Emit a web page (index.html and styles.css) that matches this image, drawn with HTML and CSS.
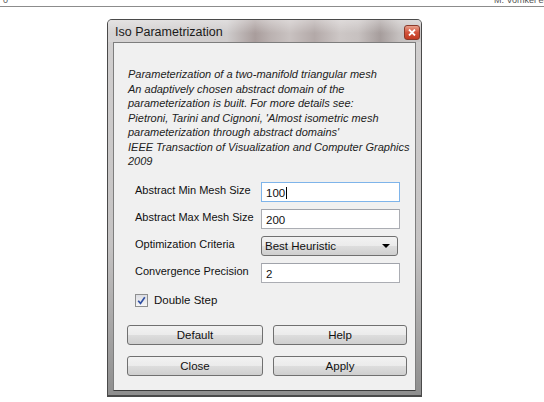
FILE: index.html
```html
<!DOCTYPE html>
<html>
  <head>
    <meta charset="UTF-8">
    <title>Iso Parametrization</title>
    <link rel="stylesheet" href="styles.css">
  </head>
  <body>

    <div class="page-head">
      <span>0</span>
      <span class="authors">M. Vomkel et al.</span>
    </div>

    <div class="window">
      <div class="titlebar">
        <span class="title">Iso Parametrization</span>
        <span class="close-btn">
          <svg width="8" height="7" viewBox="0 0 8 7">
            <path d="M1 0.5 L7 6.5 M7 0.5 L1 6.5" stroke="#fff" stroke-width="1.8"/>
          </svg>
        </span>
      </div>

      <div class="client">
        <p class="desc">
          Parameterization of a two-manifold triangular mesh<br>
          An adaptively chosen abstract domain of the<br>
          parameterization is built. For more details see:<br>
          Pietroni, Tarini and Cignoni, 'Almost isometric mesh<br>
          parameterization through abstract domains'<br>
          IEEE Transaction of Visualization and Computer Graphics<br>
          2009
        </p>

        <form class="fields" name="iso">
          <label for="min_size">Abstract Min Mesh Size</label>
          <div class="textbox focused" id="min_size">100<span class="caret"></span></div>

          <label for="max_size">Abstract Max Mesh Size</label>
          <div class="textbox" id="max_size">200</div>

          <label for="criteria">Optimization Criteria</label>
          <div class="combo" id="criteria">
            <span>Best Heuristic</span>
            <span class="arrow"></span>
          </div>

          <label for="precision">Convergence Precision</label>
          <div class="textbox" id="precision">2</div>
        </form>

        <div class="check-row">
          <span class="checkbox">
            <svg width="9" height="9" viewBox="0 0 9 9">
              <path d="M1.2 4.8 L3.5 7.4 L7.8 1.2" fill="none" stroke="#2f4fa3" stroke-width="1.7"/>
            </svg>
          </span>
          <span>Double Step</span>
        </div>

        <div class="buttons">
          <button type="button">Default</button>
          <button type="button">Help</button>
          <button type="button">Close</button>
          <button type="button">Apply</button>
        </div>
      </div>
    </div>

  </body>
</html>
```

FILE: styles.css
```css
:root {
  --frame-color: #4a4a4a;
  --field-border: #abadb3;
  --button-border: #707070;
  --client-bg: #f0f0f0;
}

body {
  margin: 0;
  width: 544px;
  height: 402px;
  overflow: hidden;
  background-color: #fff;
  font-family: "Liberation Sans", Arial, sans-serif;
  color: #111;
}

/* cabecalho da pagina, cortado no topo */
.page-head {
  display: flex;
  justify-content: space-between;
  height: 6px;
  line-height: 0;
  font-size: 9px;
  color: #555;
  padding-left: 3px;
  border-bottom: 1px solid #8c8c8c;
  overflow: hidden;
}

.authors {
  margin-right: -14px;
}

/* janela */
.window {
  width: 315px;
  height: 378px;
  margin: 12px 0 0 107px;
  box-sizing: border-box;
  border: 1px solid var(--frame-color);
  border-bottom-width: 2px;
  border-radius: 5px 5px 0 0;
  padding: 0 5px 4px;
  background: linear-gradient(to bottom, #d2d0d0, #c5c3c3 60%, #8e8e8e);
}

.titlebar {
  display: flex;
  justify-content: space-between;
  height: 22px;
  margin: 0 -5px;
  padding: 0 1px 0 7px;
  border-radius: 4px 4px 0 0;
  background:
    linear-gradient(to bottom, rgba(255, 255, 255, 0.35), rgba(255, 255, 255, 0) 60%),
    linear-gradient(to right, #d6d4d4 0%, #cfcccc 38%, #a99d9c 47%, #bbb2b1 52%,
      #c9c2c1 58%, #b3a9a8 66%, #cdc7c6 74%, #c7c1c0 80%, #a69d9c 87%, #c5c0bf 93%, #cbc7c7 100%);
}

.title {
  font-size: 12.5px;
  line-height: 24px;
  color: #1a1a1a;
}

.close-btn {
  display: flex;
  align-items: center;
  justify-content: center;
  width: 16px;
  height: 15px;
  margin-top: 5px;
  border: 1px solid #8a3a2a;
  border-radius: 3px;
  box-sizing: border-box;
  background: linear-gradient(to bottom, #e8a08c, #d3533b 50%, #c23b22);
}

.client {
  height: 349px;
  box-sizing: border-box;
  border: 1px solid #7d7d7d;
  border-bottom-color: #3c3c3c;
  background-color: var(--client-bg);
}

.desc {
  margin: 0;
  padding: 24px 0 0 14px;
  font-size: 11px;
  font-style: italic;
  line-height: 14.5px;
  color: #222;
}

/* campos */
.fields {
  display: grid;
  grid-template-columns: 126px 139px;
  grid-auto-rows: 20px;
  row-gap: 7px;
  margin: 13px 0 0 21px;
  align-items: center;
  font-size: 11.5px;
}

.fields label {
  font-size: 11px;
  padding-bottom: 4px;
}

.textbox {
  height: 20px;
  box-sizing: border-box;
  padding: 4px 4px 0;
  border: 1px solid var(--field-border);
  border-top-color: #a0a3aa;
  background-color: #fff;
}

.textbox.focused {
  border-color: #7eb4ea;
}

.caret {
  display: inline-block;
  width: 1px;
  height: 12px;
  margin-left: 1px;
  vertical-align: -2px;
  background-color: #000;
}

.combo {
  display: flex;
  align-items: center;
  justify-content: space-between;
  width: 137px;
  height: 20px;
  box-sizing: border-box;
  padding: 0 7px 0 3px;
  border: 1px solid var(--button-border);
  border-radius: 3px;
  background: linear-gradient(to bottom, #f2f2f2, #ebebeb 50%, #dddddd 51%, #cfcfcf);
}

.arrow {
  width: 0;
  height: 0;
  border-left: 4px solid transparent;
  border-right: 4px solid transparent;
  border-top: 4px solid #000;
}

/* checkbox */
.check-row {
  display: flex;
  align-items: center;
  gap: 6px;
  margin: 11px 0 0 21px;
  font-size: 11.5px;
}

.checkbox {
  display: flex;
  align-items: center;
  justify-content: center;
  width: 13px;
  height: 13px;
  box-sizing: border-box;
  border: 1px solid #8e8f8f;
  background: linear-gradient(to bottom, #dcdde3, #f6f6f6);
}

/* botoes */
.buttons {
  display: grid;
  grid-template-columns: 136px 134px;
  grid-auto-rows: 20px;
  column-gap: 10px;
  row-gap: 11px;
  margin: 18px 0 0 13px;
}

.buttons button {
  padding: 0;
  font-family: "Liberation Sans", Arial, sans-serif;
  font-size: 11.5px;
  color: #111;
  border: 1px solid var(--button-border);
  border-radius: 3px;
  background: linear-gradient(to bottom, #f2f2f2, #ebebeb 50%, #dddddd 51%, #cfcfcf);
  cursor: pointer;
}

.buttons button:hover {
  background: linear-gradient(to bottom, #eaf6fd, #d9f0fc 50%, #bee6fd 51%, #a7d9f5);
}
```
